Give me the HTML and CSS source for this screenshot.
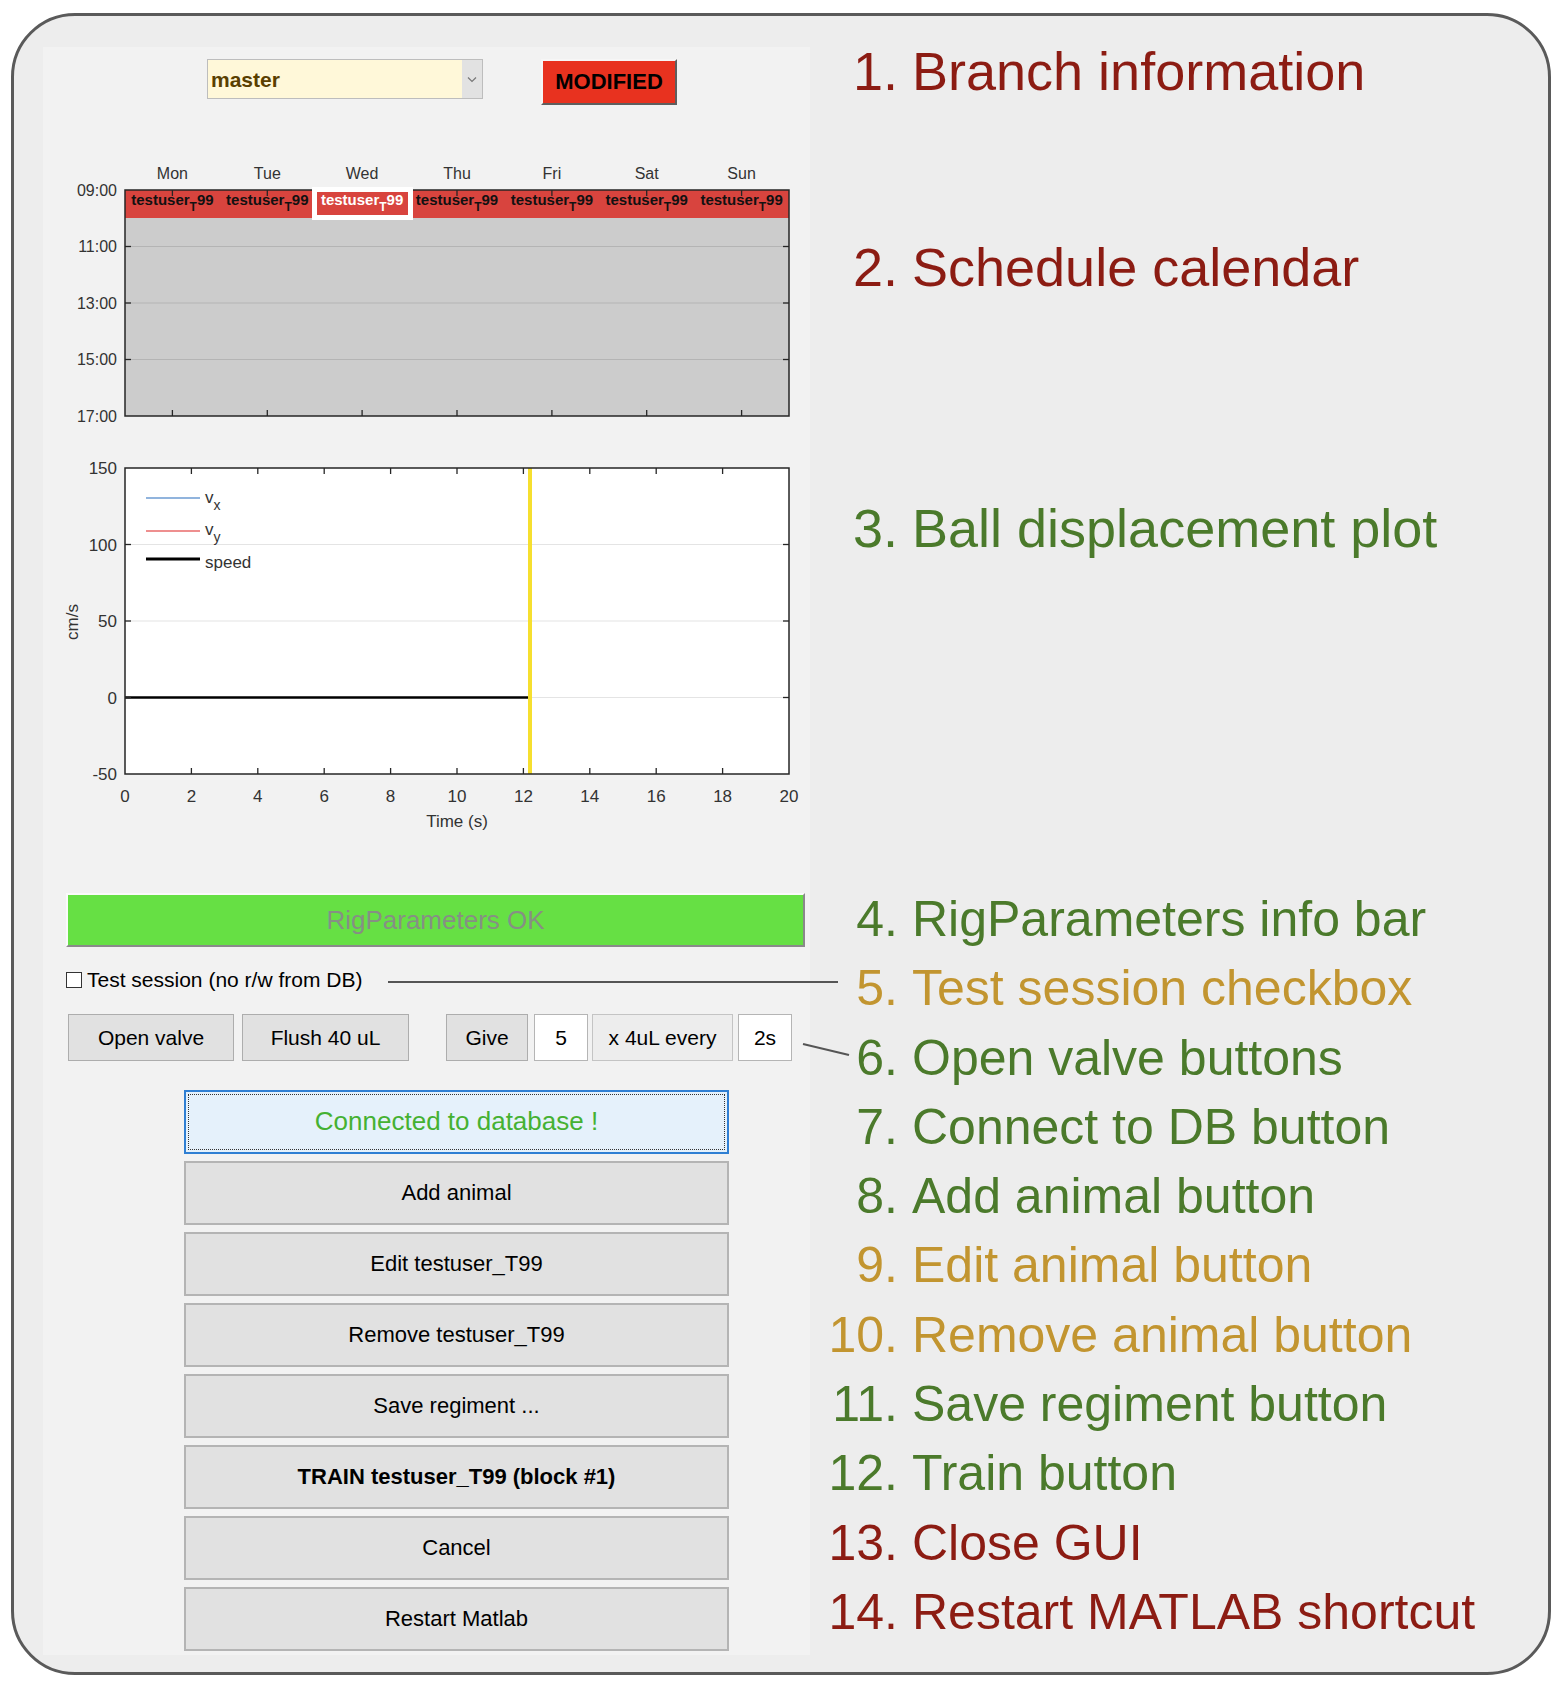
FILE: index.html
```html
<!DOCTYPE html>
<html>
<head>
<meta charset="utf-8">
<link rel="stylesheet" href="styles.css">
</head>
<body>
<div class="frame">
  <div class="gui">
    <div class="topbar">
      <div class="dropdown">
        <span class="dd-text">master</span>
        <span class="dd-arrow"><svg width="10" height="7" viewBox="0 0 10 7"><path d="M1 1.5 L5 5.5 L9 1.5" fill="none" stroke="#777" stroke-width="1.2"/></svg></span>
      </div>
      <div class="modified">MODIFIED</div>
    </div>

    <svg class="chart" width="767" height="280" viewBox="43 150 767 280">
      <g class="daylbl">
        <text x="172.4" y="178.5">Mon</text>
        <text x="267.3" y="178.5">Tue</text>
        <text x="362.1" y="178.5">Wed</text>
        <text x="457.0" y="178.5">Thu</text>
        <text x="551.9" y="178.5">Fri</text>
        <text x="646.7" y="178.5">Sat</text>
        <text x="741.6" y="178.5">Sun</text>
      </g>
      <rect x="125" y="190" width="664" height="226" fill="#cccccc"/>
      <g stroke="#b4b4b4" stroke-width="1.2">
        <line x1="125" y1="246.5" x2="789" y2="246.5"/>
        <line x1="125" y1="303" x2="789" y2="303"/>
        <line x1="125" y1="359.5" x2="789" y2="359.5"/>
      </g>
      <rect x="125" y="190" width="664" height="28" fill="#d8443e"/>
      <g stroke="#262626" stroke-width="1.3">
        <line x1="172.4" y1="190" x2="172.4" y2="196"/><line x1="172.4" y1="416" x2="172.4" y2="410"/>
        <line x1="267.3" y1="190" x2="267.3" y2="196"/><line x1="267.3" y1="416" x2="267.3" y2="410"/>
        <line x1="362.1" y1="190" x2="362.1" y2="196"/><line x1="362.1" y1="416" x2="362.1" y2="410"/>
        <line x1="457.0" y1="190" x2="457.0" y2="196"/><line x1="457.0" y1="416" x2="457.0" y2="410"/>
        <line x1="551.9" y1="190" x2="551.9" y2="196"/><line x1="551.9" y1="416" x2="551.9" y2="410"/>
        <line x1="646.7" y1="190" x2="646.7" y2="196"/><line x1="646.7" y1="416" x2="646.7" y2="410"/>
        <line x1="741.6" y1="190" x2="741.6" y2="196"/><line x1="741.6" y1="416" x2="741.6" y2="410"/>
        <line x1="125" y1="246.5" x2="131" y2="246.5"/><line x1="789" y1="246.5" x2="783" y2="246.5"/>
        <line x1="125" y1="303" x2="131" y2="303"/><line x1="789" y1="303" x2="783" y2="303"/>
        <line x1="125" y1="359.5" x2="131" y2="359.5"/><line x1="789" y1="359.5" x2="783" y2="359.5"/>
      </g>
      <rect x="125" y="190" width="664" height="226" fill="none" stroke="#262626" stroke-width="1.5"/>
      <rect x="314.5" y="189.5" width="96" height="28" fill="#d8443e" stroke="#ffffff" stroke-width="5"/>
      <g class="cell">
        <text x="172.4" y="205">testuser<tspan class="sub" dy="6">T</tspan><tspan dy="-6">99</tspan></text>
        <text x="267.3" y="205">testuser<tspan class="sub" dy="6">T</tspan><tspan dy="-6">99</tspan></text>
        <text class="sel" x="362.1" y="205">testuser<tspan class="sub" dy="6">T</tspan><tspan dy="-6">99</tspan></text>
        <text x="457.0" y="205">testuser<tspan class="sub" dy="6">T</tspan><tspan dy="-6">99</tspan></text>
        <text x="551.9" y="205">testuser<tspan class="sub" dy="6">T</tspan><tspan dy="-6">99</tspan></text>
        <text x="646.7" y="205">testuser<tspan class="sub" dy="6">T</tspan><tspan dy="-6">99</tspan></text>
        <text x="741.6" y="205">testuser<tspan class="sub" dy="6">T</tspan><tspan dy="-6">99</tspan></text>
      </g>
      <g class="timelbl">
        <text x="117" y="196">09:00</text>
        <text x="117" y="252">11:00</text>
        <text x="117" y="308.5">13:00</text>
        <text x="117" y="365">15:00</text>
        <text x="117" y="421.5">17:00</text>
      </g>
    </svg>

    <svg class="chart" width="767" height="420" viewBox="43 430 767 420">
      <rect x="125" y="468" width="664" height="306" fill="#ffffff"/>
      <g stroke="#e4e4e4" stroke-width="1.2">
        <line x1="125" y1="544.5" x2="789" y2="544.5"/>
        <line x1="125" y1="621" x2="789" y2="621"/>
        <line x1="125" y1="697.5" x2="789" y2="697.5"/>
      </g>
      <line x1="530" y1="468" x2="530" y2="774" stroke="#f6df2f" stroke-width="4"/>
      <line x1="125" y1="697.5" x2="528" y2="697.5" stroke="#000" stroke-width="2.6"/>
      <g stroke="#262626" stroke-width="1.3">
        <line x1="191.4" y1="774" x2="191.4" y2="768"/><line x1="191.4" y1="468" x2="191.4" y2="474"/>
        <line x1="257.8" y1="774" x2="257.8" y2="768"/><line x1="257.8" y1="468" x2="257.8" y2="474"/>
        <line x1="324.2" y1="774" x2="324.2" y2="768"/><line x1="324.2" y1="468" x2="324.2" y2="474"/>
        <line x1="390.6" y1="774" x2="390.6" y2="768"/><line x1="390.6" y1="468" x2="390.6" y2="474"/>
        <line x1="457" y1="774" x2="457" y2="768"/><line x1="457" y1="468" x2="457" y2="474"/>
        <line x1="523.4" y1="774" x2="523.4" y2="768"/><line x1="523.4" y1="468" x2="523.4" y2="474"/>
        <line x1="589.8" y1="774" x2="589.8" y2="768"/><line x1="589.8" y1="468" x2="589.8" y2="474"/>
        <line x1="656.2" y1="774" x2="656.2" y2="768"/><line x1="656.2" y1="468" x2="656.2" y2="474"/>
        <line x1="722.6" y1="774" x2="722.6" y2="768"/><line x1="722.6" y1="468" x2="722.6" y2="474"/>
        <line x1="125" y1="544.5" x2="131" y2="544.5"/><line x1="789" y1="544.5" x2="783" y2="544.5"/>
        <line x1="125" y1="621" x2="131" y2="621"/><line x1="789" y1="621" x2="783" y2="621"/>
        <line x1="125" y1="697.5" x2="131" y2="697.5"/><line x1="789" y1="697.5" x2="783" y2="697.5"/>
      </g>
      <rect x="125" y="468" width="664" height="306" fill="none" stroke="#262626" stroke-width="1.5"/>
      <line x1="146" y1="498" x2="200" y2="498" stroke="#6d9bd2" stroke-width="1.5"/>
      <line x1="146" y1="531" x2="200" y2="531" stroke="#e86a6a" stroke-width="1.5"/>
      <line x1="146" y1="559" x2="200" y2="559" stroke="#000" stroke-width="3"/>
      <g class="axlbl">
        <text x="205" y="503">v<tspan class="lsub" dy="7">x</tspan></text>
        <text x="205" y="535">v<tspan class="lsub" dy="7">y</tspan></text>
        <text x="205" y="568">speed</text>
      </g>
      <g class="axlbl end">
        <text x="117" y="474">150</text>
        <text x="117" y="550.5">100</text>
        <text x="117" y="627">50</text>
        <text x="117" y="703.5">0</text>
        <text x="117" y="780">-50</text>
      </g>
      <g class="axlbl mid">
        <text x="125" y="802">0</text>
        <text x="191.4" y="802">2</text>
        <text x="257.8" y="802">4</text>
        <text x="324.2" y="802">6</text>
        <text x="390.6" y="802">8</text>
        <text x="457" y="802">10</text>
        <text x="523.4" y="802">12</text>
        <text x="589.8" y="802">14</text>
        <text x="656.2" y="802">16</text>
        <text x="722.6" y="802">18</text>
        <text x="789" y="802">20</text>
        <text x="457" y="827">Time (s)</text>
        <text transform="translate(77.5,622) rotate(-90)">cm/s</text>
      </g>
    </svg>

    <div class="infobar">RigParameters OK</div>

    <div class="checkrow"><span class="checkbox"></span><span>Test session (no r/w from DB)</span></div>

    <div class="valverow">
      <div class="vbtn w-open">Open valve</div>
      <div class="vbtn w-flush">Flush 40 uL</div>
      <div class="vbtn w-give">Give</div>
      <div class="vbtn field w-n">5</div>
      <div class="vbtn plain w-every">x 4uL every</div>
      <div class="vbtn field w-s">2s</div>
    </div>

    <div class="stack">
      <div class="bigbtn connected">Connected to database !</div>
      <div class="bigbtn">Add animal</div>
      <div class="bigbtn">Edit testuser_T99</div>
      <div class="bigbtn">Remove testuser_T99</div>
      <div class="bigbtn">Save regiment ...</div>
      <div class="bigbtn bold">TRAIN testuser_T99 (block #1)</div>
      <div class="bigbtn">Cancel</div>
      <div class="bigbtn">Restart Matlab</div>
    </div>
  </div>

  <div class="labels">
    <div class="lab big red l1"><span class="num">1.</span><span class="txt">Branch information</span></div>
    <div class="lab big red l2"><span class="num">2.</span><span class="txt">Schedule calendar</span></div>
    <div class="lab big green l3"><span class="num">3.</span><span class="txt">Ball displacement plot</span></div>
    <div class="lab green l4"><span class="num">4.</span><span class="txt">RigParameters info bar</span></div>
    <div class="lab gold"><span class="num">5.</span><span class="txt">Test session checkbox</span></div>
    <div class="lab green"><span class="num">6.</span><span class="txt">Open valve buttons</span></div>
    <div class="lab green"><span class="num">7.</span><span class="txt">Connect to DB button</span></div>
    <div class="lab green"><span class="num">8.</span><span class="txt">Add animal button</span></div>
    <div class="lab gold"><span class="num">9.</span><span class="txt">Edit animal button</span></div>
    <div class="lab gold"><span class="num">10.</span><span class="txt">Remove animal button</span></div>
    <div class="lab green"><span class="num">11.</span><span class="txt">Save regiment button</span></div>
    <div class="lab green"><span class="num">12.</span><span class="txt">Train button</span></div>
    <div class="lab red"><span class="num">13.</span><span class="txt">Close GUI</span></div>
    <div class="lab red"><span class="num">14.</span><span class="txt">Restart MATLAB shortcut</span></div>
  </div>
</div>

<svg class="annot" width="1558" height="1686" viewBox="0 0 1558 1686">
  <line x1="388" y1="982" x2="838" y2="982" stroke="#555" stroke-width="2"/>
  <line x1="803" y1="1044" x2="849" y2="1055" stroke="#555" stroke-width="2"/>
</svg>
</body>
</html>
```

FILE: styles.css
```css
html, body {
  margin: 0;
  background: #ffffff;
}
body {
  padding: 13px 0 0 11px;
  width: 1558px;
  height: 1686px;
  box-sizing: border-box;
  overflow: hidden;
  font-family: "Liberation Sans", Arial, sans-serif;
  color: #000;
}
.frame {
  box-sizing: border-box;
  width: 1540px;
  height: 1662px;
  border: 3px solid #5a5a5a;
  border-radius: 64px;
  background: #ededed;
  display: flex;
  align-items: flex-start;
}
.gui {
  margin: 31px 0 0 29px;
  width: 767px;
  height: 1608px;
  background: #f2f2f2;
  display: flex;
  flex-direction: column;
  flex-shrink: 0;
}
.topbar {
  height: 103px;
  display: flex;
  align-items: flex-start;
  flex-shrink: 0;
}
.dropdown {
  margin: 12px 0 0 164px;
  width: 276px;
  height: 40px;
  box-sizing: border-box;
  border: 1px solid #bdbdbd;
  background: #fff8d9;
  display: flex;
}
.dd-text {
  flex: 1;
  padding-left: 3px;
  font-weight: bold;
  font-size: 21px;
  line-height: 40px;
  color: #5a3f00;
}
.dd-arrow {
  width: 20px;
  background: #e2e2e2;
  display: flex;
  align-items: center;
  justify-content: center;
}
.modified {
  margin: 12px 0 0 58px;
  width: 136px;
  height: 46px;
  box-sizing: border-box;
  background: #e8321f;
  border: 2px solid;
  border-color: #f6f6f6 #5e5e5e #5e5e5e #f6f6f6;
  font-weight: bold;
  font-size: 22px;
  display: flex;
  align-items: center;
  justify-content: center;
}
.chart {
  display: block;
  flex-shrink: 0;
  font-family: "Liberation Sans", Arial, sans-serif;
}
.daylbl text {
  font-size: 16px;
  fill: #333;
  text-anchor: middle;
}
.timelbl text {
  font-size: 16px;
  fill: #333;
  text-anchor: end;
}
.cell text {
  font-size: 15px;
  font-weight: bold;
  fill: #111;
  text-anchor: middle;
}
.cell text.sel {
  fill: #ffffff;
}
.cell .sub {
  font-size: 12px;
}
.axlbl text {
  font-size: 17px;
  fill: #333;
}
.axlbl.end text {
  text-anchor: end;
}
.axlbl.mid text {
  text-anchor: middle;
}
.axlbl .lsub {
  font-size: 14px;
}
.infobar {
  margin: 43px 0 0 23px;
  width: 739px;
  height: 54px;
  box-sizing: border-box;
  background: #66e044;
  border: 2px solid;
  border-color: #fafafa #8a8a8a #8a8a8a #fafafa;
  color: #868f84;
  font-size: 26px;
  display: flex;
  align-items: center;
  justify-content: center;
  flex-shrink: 0;
}
.checkrow {
  margin: 18px 0 0 23px;
  height: 30px;
  display: flex;
  align-items: center;
  font-size: 21px;
  flex-shrink: 0;
}
.checkbox {
  width: 16px;
  height: 16px;
  box-sizing: border-box;
  border: 1px solid #333;
  background: #fff;
  margin-right: 5px;
}
.valverow {
  margin: 19px 0 0 25px;
  height: 47px;
  display: flex;
  flex-shrink: 0;
}
.vbtn {
  box-sizing: border-box;
  height: 47px;
  border: 1px solid #adadad;
  background: #e1e1e1;
  font-size: 21px;
  display: flex;
  align-items: center;
  justify-content: center;
}
.vbtn.field {
  background: #ffffff;
  border-color: #b5b5b5;
}
.vbtn.plain {
  background: #ededed;
  border-color: #c4c4c4;
}
.w-open { width: 166px; }
.w-flush { width: 167px; margin-left: 8px; }
.w-give { width: 82px; margin-left: 37px; }
.w-n { width: 54px; margin-left: 6px; }
.w-every { width: 141px; margin-left: 4px; }
.w-s { width: 54px; margin-left: 5px; }
.stack {
  margin: 29px 0 0 141px;
  width: 545px;
  display: flex;
  flex-direction: column;
  gap: 7.5px;
}
.bigbtn {
  box-sizing: border-box;
  height: 63.5px;
  border: 2px solid #b4b4b4;
  background: #e1e1e1;
  font-size: 22px;
  display: flex;
  align-items: center;
  justify-content: center;
}
.bigbtn.bold {
  font-weight: bold;
}
.bigbtn.connected {
  background: #e5f1fb;
  border: 2px solid #2f7fd3;
  outline: 1px dotted #333;
  outline-offset: -5px;
  color: #45b132;
  font-size: 26px;
}
.labels {
  margin-left: 18px;
  display: flex;
  flex-direction: column;
}
.lab {
  height: 69.3px;
  display: flex;
  align-items: center;
  font-size: 50px;
  white-space: nowrap;
}
.lab.big {
  font-size: 54px;
}
.num {
  width: 70px;
  text-align: right;
}
.txt {
  margin-left: 14px;
}
.l1 { margin-top: 20.4px; }
.l2 { margin-top: 126.7px; }
.l3 { margin-top: 191.7px; }
.l4 { margin-top: 321.7px; }
.red { color: #8c1c13; }
.green { color: #4b7a2b; }
.gold { color: #c29530; }
.annot {
  position: absolute;
  left: 0;
  top: 0;
  pointer-events: none;
}
```
